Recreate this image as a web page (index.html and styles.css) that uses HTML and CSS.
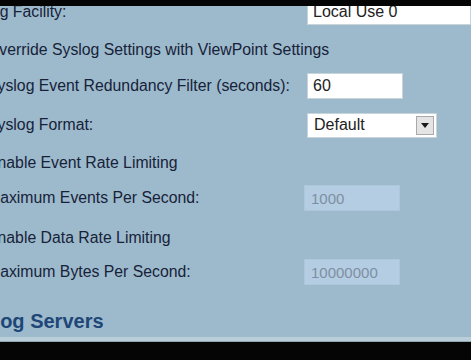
FILE: index.html
```html
<!DOCTYPE html>
<html lang="en">
<head>
    <meta charset="UTF-8">
    <title>Syslog Settings</title>
    <link rel="stylesheet" href="styles.css">
</head>
<body>
    <div class="bar-top"></div>

    <!-- Syslog settings form -->
    <div class="form">
        <div class="row row-cut">
            <span class="label label-facility">Syslog Facility:</span>
            <div class="field wide">Local Use 0</div>
        </div>
        <div class="row gap-8">
            <span class="label">Override Syslog Settings with ViewPoint Settings</span>
        </div>
        <div class="row gap-2">
            <span class="label">Syslog Event Redundancy Filter (seconds):</span>
            <div class="field">60</div>
        </div>
        <div class="row gap-5">
            <span class="label">Syslog Format:</span>
            <div class="select">
                <span>Default</span>
                <span class="arrow">
                    <svg width="8" height="5" viewBox="0 0 8 5"><path d="M0 0h8L4 5z" fill="#1a1a1a"/></svg>
                </span>
            </div>
        </div>
        <div class="row gap-4">
            <span class="label">Enable Event Rate Limiting</span>
        </div>
        <div class="row gap-1">
            <span class="label">Maximum Events Per Second:</span>
            <div class="field disabled">1000</div>
        </div>
        <div class="row gap-6">
            <span class="label">Enable Data Rate Limiting</span>
        </div>
        <div class="row">
            <span class="label">Maximum Bytes Per Second:</span>
            <div class="field disabled">10000000</div>
        </div>

        <h2 class="section">Syslog Servers</h2>
    </div>

    <div class="rule"></div>
    <div class="bar-bottom"></div>
</body>
</html>
```

FILE: styles.css
```css
/* Page */
body {
    margin: 0;
    padding: 0;
    width: 471px;
    height: 360px;
    overflow: hidden;
    background-color: #9dbacd;
    font-family: "Liberation Sans", Arial, sans-serif;
    color: #172238;
}

.bar-top {
    height: 6px;
    background-color: #050505;
}

.bar-bottom {
    height: 19px;
    background-color: #050505;
}

/* Form rows */
.form {
    margin-left: -13px;
    height: 331px;
}

.row {
    display: flex;
    align-items: center;
    height: 34px;
}

.row-cut {
    height: 19px;
    align-items: flex-end;
    overflow: hidden;
}

.row-cut .label {
    padding-bottom: 4px;
}

.gap-1 { margin-top: 1px; }
.gap-2 { margin-top: 2px; }
.gap-4 { margin-top: 4px; }
.gap-5 { margin-top: 5px; }
.gap-6 { margin-top: 6px; }
.gap-8 { margin-top: 8px; }

.label {
    width: 320px;
    flex-shrink: 0;
    font-size: 15.8px;
    white-space: nowrap;
}

.label-facility {
    margin-left: -26px;
    width: 346px;
}

/* Controls */
.field {
    box-sizing: border-box;
    width: 96px;
    height: 26px;
    padding: 0 5px;
    display: flex;
    align-items: center;
    background-color: #ffffff;
    border: 1px solid #c9d3da;
    font-size: 16px;
    color: #222222;
}

.field.wide {
    width: 180px;
}

.field.disabled {
    margin-left: -3px;
    padding-left: 6px;
    background-color: #b5cde3;
    border-color: #aec6da;
    color: #7e8fa2;
    font-size: 15px;
}

.select {
    box-sizing: border-box;
    width: 130px;
    height: 25px;
    padding: 0 2px 0 6px;
    display: flex;
    align-items: center;
    justify-content: space-between;
    background-color: #ffffff;
    border: 1px solid #c9d3da;
    font-size: 16px;
    color: #222222;
}

.arrow {
    box-sizing: border-box;
    width: 18px;
    height: 19px;
    display: flex;
    align-items: center;
    justify-content: center;
    background-color: #e4e4e4;
    border: 1px solid #a9a9a9;
}

/* Section heading */
.section {
    margin: 0 0 0 -28px;
    padding-top: 21px;
    font-size: 20px;
    font-weight: bold;
    color: #1e4677;
}

.rule {
    height: 4px;
    background-color: #b9ced9;
    border-bottom: 1px solid #8fa6b3;
}
```
